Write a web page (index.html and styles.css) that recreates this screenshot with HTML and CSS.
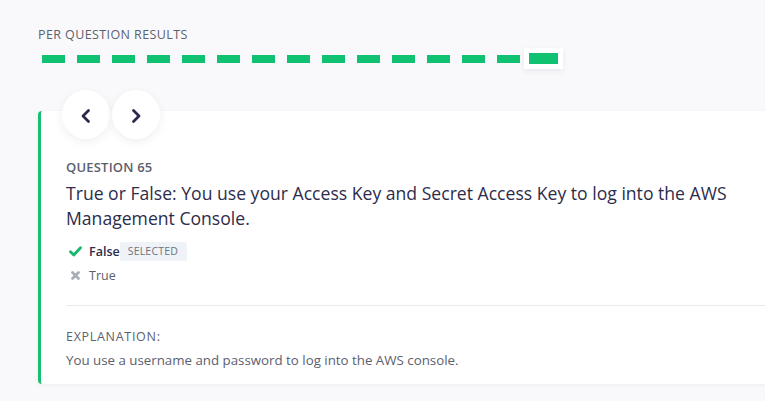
FILE: index.html
```html
<!DOCTYPE html>
<html>
<head>
<meta charset="utf-8">
<link rel="stylesheet" href="styles.css">
</head>
<body>
<div class="page">
  <div class="results-title">PER QUESTION RESULTS</div>
  <div class="dashes">
    <span class="dash"><i></i></span><span class="dash"><i></i></span><span class="dash"><i></i></span><span class="dash"><i></i></span><span class="dash"><i></i></span><span class="dash"><i></i></span><span class="dash"><i></i></span><span class="dash"><i></i></span><span class="dash"><i></i></span><span class="dash"><i></i></span><span class="dash"><i></i></span><span class="dash"><i></i></span><span class="dash"><i></i></span><span class="dash"><i></i></span><span class="dash active"><i></i></span>
  </div>
  <div class="card">
    <div class="nav">
      <button class="nav-btn" aria-label="Previous">
        <svg width="16" height="16" viewBox="0 0 16 16"><path d="M10.5 2.5 L5 8 L10.5 13.5" fill="none" stroke="#2b2a4c" stroke-width="2.8" stroke-linecap="round" stroke-linejoin="round"/></svg>
      </button>
      <button class="nav-btn" aria-label="Next">
        <svg width="16" height="16" viewBox="0 0 16 16"><path d="M5.5 2.5 L11 8 L5.5 13.5" fill="none" stroke="#2b2a4c" stroke-width="2.8" stroke-linecap="round" stroke-linejoin="round"/></svg>
      </button>
    </div>
    <div class="q-label">QUESTION 65</div>
    <div class="q-title">True or False: You use your Access Key and Secret Access Key to log into the AWS Management Console.</div>
    <ul class="answers">
      <li class="answer correct">
        <svg class="icon" width="13" height="11" viewBox="0 0 13 11"><path d="M1.5 5.8 L4.8 9 L11.5 1.8" fill="none" stroke="#16b86c" stroke-width="2.8" stroke-linecap="round" stroke-linejoin="round"/></svg>
        <span class="answer-text">False</span>
        <span class="badge">SELECTED</span>
      </li>
      <li class="answer">
        <svg class="icon" width="13" height="11" viewBox="0 0 13 11"><path d="M3.5 2.5 L9.5 8.5 M9.5 2.5 L3.5 8.5" fill="none" stroke="#a9adb6" stroke-width="2.8" stroke-linecap="round"/></svg>
        <span class="answer-text">True</span>
      </li>
    </ul>
    <div class="divider"></div>
    <div class="exp-label">EXPLANATION:</div>
    <div class="exp-text">You use a username and password to log into the AWS console.</div>
  </div>
</div>
</body>
</html>
```

FILE: styles.css
```css
* { box-sizing: border-box; }
html, body { margin: 0; padding: 0; }
body {
  background: #f9f9fb;
  font-family: "Open Sans", "Noto Sans", sans-serif;
  color: #2d2c4b;
  width: 765px;
  height: 401px;
  overflow: hidden;
}
.page {
  padding: 27px 0 0 38px;
}
.results-title {
  font-size: 12.5px;
  font-weight: 500;
  color: #5c606e;
  letter-spacing: 0.4px;
  line-height: 16px;
}
.dashes {
  display: flex;
  margin-top: 5px;
  margin-left: -2px;
  height: 21px;
  align-items: center;
}
.dash {
  width: 35px;
  height: 21px;
  display: flex;
  align-items: center;
  justify-content: center;
}
.dash i {
  display: block;
  width: 23px;
  height: 8px;
  background: #10c172;
}
.dash.active {
  width: 39px;
  margin-left: -2px;
  background: #fff;
  box-shadow: 0 2px 6px rgba(40, 40, 80, 0.08);
}
.dash.active i {
  width: 29px;
  height: 11px;
}
.card {
  position: relative;
  margin-top: 42px;
  width: 760px;
  height: 273px;
  background: #fff;
  border-left: 3px solid #18bf70;
  border-radius: 4px 0 0 4px;
  box-shadow: 0 1px 4px rgba(40, 40, 80, 0.06);
  padding: 48px 0 0 25px;
}
.nav {
  position: absolute;
  left: 21px;
  top: -21px;
  display: flex;
  gap: 2px;
}
.nav-btn {
  width: 48px;
  height: 49px;
  border-radius: 50%;
  border: none;
  background: #fff;
  box-shadow: 0 3px 10px rgba(40, 40, 80, 0.07);
  display: flex;
  align-items: center;
  justify-content: center;
  padding: 3px 0 0 0;
}
.q-label {
  font-size: 13px;
  font-weight: 600;
  color: #5c606e;
  line-height: 17px;
  letter-spacing: 0.2px;
}
.q-title {
  margin-top: 5px;
  font-size: 17.6px;
  font-weight: 500;
  line-height: 25px;
  color: #2d2c4b;
  width: 695px;
}
.answers {
  list-style: none;
  margin: 8px 0 0 3px;
  padding: 0;
}
.answer {
  display: flex;
  align-items: center;
  height: 24px;
  font-size: 12.5px;
  color: #5c606e;
}
.answer .icon {
  margin-right: 7px;
}
.answer.correct .answer-text {
  font-weight: 600;
  color: #2d2c4b;
}
.badge {
  margin-left: 0;
  background: #eff2f7;
  color: #6d7280;
  font-size: 10.5px;
  line-height: 19px;
  padding: 0 9px 0 8px;
  border-radius: 2px;
  letter-spacing: 0.2px;
}
.divider {
  margin-top: 18px;
  height: 1px;
  background: #e9e9ee;
  margin-right: 0;
}
.exp-label {
  margin-top: 22px;
  font-size: 12.5px;
  font-weight: 500;
  color: #5c606e;
  line-height: 17px;
  letter-spacing: 0.7px;
}
.exp-text {
  margin-top: 7px;
  font-size: 13.3px;
  color: #5c606e;
  line-height: 17px;
}
```
